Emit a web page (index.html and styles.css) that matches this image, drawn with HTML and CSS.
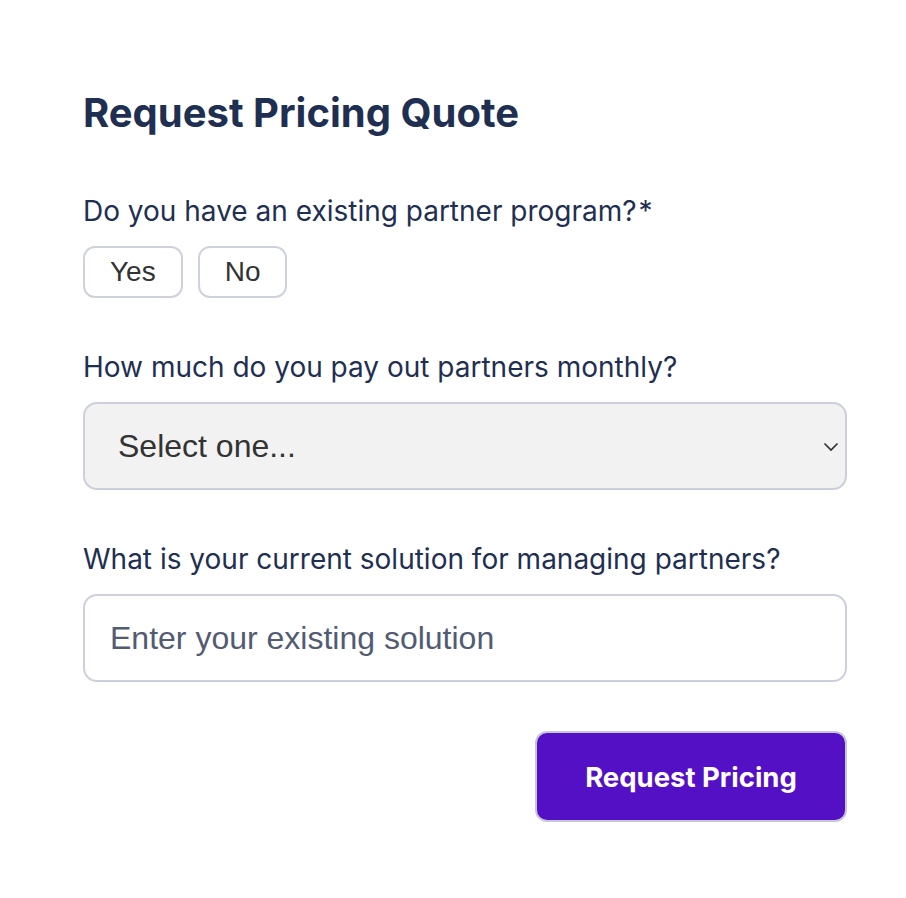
FILE: index.html
```
<!DOCTYPE html>
<html lang="en">
<head>
    <meta charset="UTF-8">
    <meta name="viewport" content="width=device-width, initial-scale=1.0">
    <title>Request Pricing Quote</title>
    <link rel="stylesheet" href="styles.css">
</head>
<body>

<div class="container">
    <h2 class="form-title">Request Pricing Quote</h2>

    <form class="quote-form" onsubmit="return false;">
        <div class="field">
            <label class="field-label">Do you have an existing partner program?<span class="required">*</span></label>
            <div class="choice-group">
                <button type="button" class="choice-btn">Yes</button>
                <button type="button" class="choice-btn">No</button>
            </div>
        </div>

        <div class="field">
            <label class="field-label" for="payout">How much do you pay out partners monthly?</label>
            <div class="select-wrap">
                <select id="payout" class="select-input">
                    <option value="">Select one...</option>
                    <option value="1">Under $10k</option>
                    <option value="2">$10k - $50k</option>
                    <option value="3">Over $50k</option>
                </select>
                <svg class="select-arrow" width="16" height="10" viewBox="0 0 16 10">
                    <path d="M1.5 1.5 L8 8 L14.5 1.5" fill="none" stroke="#333" stroke-width="1.7"/>
                </svg>
            </div>
        </div>

        <div class="field">
            <label class="field-label" for="solution">What is your current solution for managing partners?</label>
            <input id="solution" class="text-input" type="text" placeholder="Enter your existing solution">
        </div>

        <div class="form-actions">
            <button type="submit" class="submit-btn">Request Pricing</button>
        </div>
    </form>
</div>

</body>
</html>
```

FILE: styles.css
```
body {
    font-family: Inter, "Liberation Sans", sans-serif;
    margin: 0;
    background-color: #ffffff;
    color: #1f2f52;
}

.container {
    padding: 89px 59px 40px 83px;
}

.form-title {
    margin: 0 0 56px;
    font-size: 40px;
    font-weight: 700;
    line-height: 48px;
    color: #1f2f52;
}

.field {
    margin-bottom: 51px;
}

.field-label {
    display: block;
    font-size: 28px;
    line-height: 36px;
    margin-bottom: 17px;
}

.required {
    margin-left: 2px;
}

.choice-group {
    display: flex;
    gap: 15px;
}

.choice-btn {
    font-family: "Liberation Sans", Arial, sans-serif;
    font-size: 28px;
    color: #333;
    background: #fff;
    border: 2px solid #cfd2db;
    border-radius: 12px;
    height: 52px;
    padding: 0 25px;
    cursor: pointer;
}

.select-wrap {
    position: relative;
}

.select-input {
    width: 100%;
    height: 88px;
    appearance: none;
    -webkit-appearance: none;
    font-family: "Liberation Sans", Arial, sans-serif;
    font-size: 32px;
    color: #333;
    background: #f2f2f3;
    border: 2px solid #cdd0da;
    border-radius: 14px;
    padding: 0 33px;
}

.select-arrow {
    position: absolute;
    right: 8px;
    top: 40px;
}

.text-input {
    display: block;
    box-sizing: border-box;
    width: 100%;
    height: 88px;
    margin-top: 1px;
    font-family: "Liberation Sans", Arial, sans-serif;
    font-size: 32px;
    color: #333;
    background: #fff;
    border: 2px solid #cdd0da;
    border-radius: 14px;
    padding: 0 25px;
}

.text-input::placeholder {
    color: #535b72;
}

.form-actions {
    display: flex;
    justify-content: flex-end;
    margin-top: -2px;
}

.submit-btn {
    font-family: Inter, "Liberation Sans", sans-serif;
    font-size: 27.5px;
    font-weight: 700;
    color: #fff;
    background: #5410c5;
    border: 2px solid #c9c6d8;
    border-radius: 12px;
    width: 312px;
    height: 91px;
    cursor: pointer;
}
```
